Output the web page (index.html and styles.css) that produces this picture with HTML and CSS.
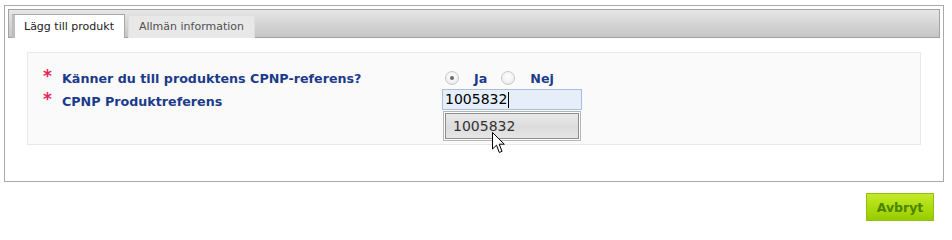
FILE: index.html
```html
<!DOCTYPE html>
<html lang="sv">
<head>
<meta charset="utf-8">
<title>Lägg till produkt</title>
<link rel="stylesheet" href="styles.css">
</head>
<body>
<div class="frame">
  <div class="tabbar">
    <div class="tab active">Lägg till produkt</div>
    <div class="tab">Allmän information</div>
  </div>
  <div class="panel">
    <div class="row">
      <div class="label"><span class="req">*</span>Känner du till produktens CPNP-referens?</div>
      <div class="control radios">
        <span class="radio checked"></span><span class="opt">Ja</span>
        <span class="radio"></span><span class="opt">Nej</span>
      </div>
    </div>
    <div class="row">
      <div class="label"><span class="req">*</span>CPNP Produktreferens</div>
      <div class="control">
        <div class="inputwrap">
          <div class="input">1005832<span class="caret"></span></div>
          <div class="suggest">
            <div class="item">1005832</div>
          </div>
          <svg class="pointer" width="13" height="22" viewBox="0 0 13 22">
            <path d="M0.5 0.5 L0.5 17 L4.5 13.2 L7.3 20.5 L10 19.3 L7.2 12.2 L12.3 12.2 Z" fill="#fff" stroke="#000" stroke-width="1" stroke-linejoin="miter"/>
          </svg>
        </div>
      </div>
    </div>
  </div>
</div>
<div class="actions">
  <button class="btn" type="button">Avbryt</button>
</div>
</body>
</html>
```

FILE: styles.css
```css
html, body {
  margin: 0;
  padding: 0;
  background: #fff;
  font-family: "DejaVu Sans", Verdana, sans-serif;
}

.frame {
  margin: 5px 0 0 4px;
  width: 932px;
  height: 169px;
  border: 1px solid #a9a9a9;
  padding: 3px;
  box-sizing: content-box;
  display: flex;
  flex-direction: column;
}

.tabbar {
  height: 24px;
  padding: 3px 0 0 3px;
  border: 1px solid #a3a3a3;
  border-bottom-color: #a0a0a0;
  background: linear-gradient(to bottom, #e6e6e6 0%, #d2d2d2 60%, #c6c6c6 100%);
  display: flex;
  align-items: flex-end;
  gap: 3px;
  flex: none;
}

.tab {
  height: 23px;
  box-sizing: border-box;
  padding: 0 10px 0 10px;
  font-size: 11px;
  line-height: 22px;
  color: #505050;
  background: #e8e8e8;
  border: 1px solid #dedede;
  border-bottom: none;
  margin-bottom: -1px;
  white-space: nowrap;
  flex: none;
}

.tab.active {
  height: 24px;
  padding: 0 10px 0 9px;
  background: #fff;
  color: #222;
  border: 1px solid #a8a8a8;
  border-left: 3px solid #bdbdbd;
  border-bottom: none;
  line-height: 23px;
}

.panel {
  margin: 14px 0 0 19px;
  width: 894px;
  height: 93px;
  background: #fafafa;
  border: 1px solid #e9e9e9;
  padding: 15px 0 0 15px;
  box-sizing: border-box;
  display: flex;
  flex-direction: column;
  gap: 1px;
}

.row {
  display: flex;
  align-items: center;
}

.row:first-child {
  height: 20px;
}

.row:first-child .label {
  margin-top: 2px;
}

.row:nth-child(2) {
  height: 21px;
  align-items: flex-start;
}

.label {
  width: 399px;
  flex: none;
  font-size: 12.7px;
  font-weight: bold;
  color: #1c3a8c;
  display: flex;
  align-items: center;
  line-height: 20px;
}

.row:nth-child(2) .label {
  margin-top: 3px;
}

.req {
  color: #e5245a;
  font-size: 17px;
  width: 19px;
  flex: none;
  position: relative;
  top: -3px;
  font-weight: bold;
}

.control {
  display: flex;
  align-items: center;
}

.radios {
  padding-left: 3px;
}

.radio {
  width: 12px;
  height: 12px;
  border-radius: 50%;
  border: 1px solid #c8c8c8;
  background: radial-gradient(circle at 50% 40%, #ffffff 0%, #f4f4f4 50%, #e2e2e2 100%);
  box-sizing: content-box;
  position: relative;
  flex: none;
}

.radio.checked::after {
  content: "";
  position: absolute;
  left: 4px;
  top: 4px;
  width: 4px;
  height: 4px;
  border-radius: 50%;
  background: #6a6a6a;
}

.opt {
  font-size: 12.7px;
  font-weight: bold;
  color: #1c3a8c;
  margin-left: 15px;
  margin-right: 14px;
}

.inputwrap {
  position: relative;
  width: 140px;
}

.input {
  height: 21px;
  box-sizing: border-box;
  border: 1px solid #a7bfdc;
  background: #e6eefa;
  font-size: 14px;
  line-height: 19px;
  padding-left: 2px;
  color: #000;
  display: flex;
  align-items: center;
}

.caret {
  display: inline-block;
  width: 1px;
  height: 16px;
  background: #000;
  margin-left: 1px;
}

.suggest {
  position: absolute;
  left: 1px;
  top: 22px;
  width: 138px;
  height: 30px;
  box-sizing: border-box;
  border: 1px solid #b4b4b4;
  background: #fff;
  padding: 1px;
}

.item {
  height: 26px;
  box-sizing: border-box;
  border: 1px solid #8c8c8c;
  background: linear-gradient(to bottom, #e9e9e9 0%, #dcdcdc 55%, #e6e6e6 100%);
  font-size: 14px;
  color: #333;
  line-height: 24px;
  padding-left: 7px;
}

.pointer {
  position: absolute;
  left: 50px;
  top: 43px;
}

.actions {
  display: flex;
  justify-content: flex-end;
  padding: 11px 18px 0 0;
}

.btn {
  width: 68px;
  height: 28px;
  border: 1px solid #8fbf10;
  background: linear-gradient(to bottom, #c4ea2a 0%, #acdc10 50%, #98cc00 100%);
  color: #4c8400;
  font-family: "DejaVu Sans", Verdana, sans-serif;
  font-weight: bold;
  font-size: 12.5px;
  padding: 0;
  margin: 0;
}
```
